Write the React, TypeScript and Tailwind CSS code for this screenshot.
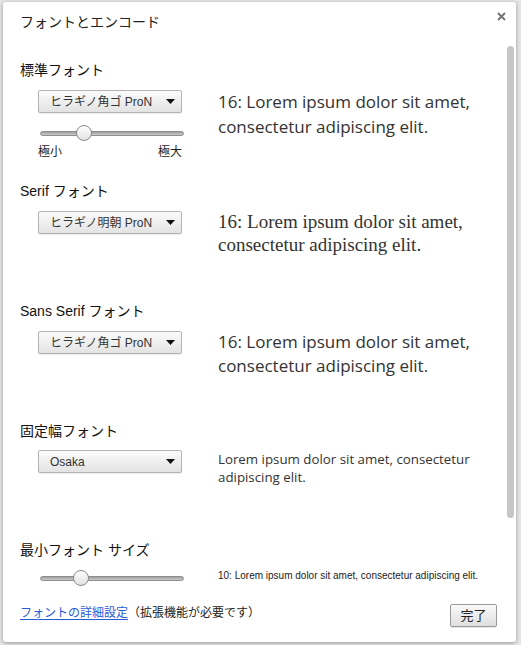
import React from "react";

function Arrow() {
  return (
    <svg width="9" height="5" viewBox="0 0 9 5" className="block">
      <path d="M0 0H9L4.5 5Z" fill="#111" />
    </svg>
  );
}

function Select({ label }: { label: string }) {
  return (
    <div className="w-[144px] h-[23px] border border-[#b4b4b4] rounded-[2px] bg-linear-to-b from-[#fbfbfb] to-[#e3e3e3] flex items-center justify-between pl-[11px] pr-[6px] text-[12px] leading-none text-[#333] shadow-[0_1px_1px_rgba(0,0,0,0.08)]">
      <span>{label}</span>
      <Arrow />
    </div>
  );
}

function Slider({ pos }: { pos: number }) {
  return (
    <div className="relative w-[144px] h-[16px] flex items-center ml-[2px]">
      <div className="w-full h-[5px] rounded-full bg-linear-to-b from-[#9c9c9c] to-[#cdcdcd] border border-[#8e8e8e]" />
      <div
        className="absolute top-0 w-[16px] h-[16px] rounded-full border border-[#8a8a8a] bg-linear-to-b from-white to-[#e2e2e2]"
        style={{ left: pos }}
      />
    </div>
  );
}

function Label({ children }: { children: React.ReactNode }) {
  return <div className="h-[18px] leading-[18px] text-[14px] text-[#111]">{children}</div>;
}

export default function App() {
  return (
    <div className="w-[521px] h-[645px] bg-[#e6e6e6] pt-[2px] pl-[3px] overflow-hidden font-['Liberation_Sans','Noto_Sans_CJK_JP',sans-serif]">
      <div className="relative w-[513px] h-[640px] bg-white rounded-[3px] shadow-[0_1px_4px_rgba(0,0,0,0.35)] flex flex-col">
        <div className="h-[38px] shrink-0 pt-[11px] pl-[17px] text-[14px] leading-[18px] text-[#222]">
          フォントとエンコード
        </div>
        <div className="absolute top-[10px] right-[10px]">
          <svg width="9" height="9" viewBox="0 0 9 9" className="block">
            <path d="M1 1L8 8M8 1L1 8" stroke="#777" strokeWidth="2" />
          </svg>
        </div>

        <div className="h-[555px] shrink-0 flex">
          <div className="flex-1 overflow-hidden pl-[17px] pt-[21px]">
            {/* Section 1 */}
            <div className="h-[121px]">
              <Label>標準フォント</Label>
              <div className="flex mt-[11px] pl-[18px]">
                <div className="w-[180px] shrink-0">
                  <Select label="ヒラギノ角ゴ ProN" />
                  <div className="mt-[12px]">
                    <Slider pos={36} />
                  </div>
                  <div className="w-[144px] flex justify-between mt-[4px] text-[12px] leading-[14px] text-[#222]">
                    <span>極小</span>
                    <span>極大</span>
                  </div>
                </div>
                <div className="-mt-[1px] text-[17px] leading-[25px] text-[#333] font-['Open_Sans',sans-serif] whitespace-nowrap">
                  16: Lorem ipsum dolor sit amet,
                  <br />
                  consectetur adipiscing elit.
                </div>
              </div>
            </div>
            {/* Section 2 */}
            <div className="h-[120px]">
              <Label>Serif フォント</Label>
              <div className="flex mt-[11px] pl-[18px]">
                <div className="w-[180px] shrink-0">
                  <Select label="ヒラギノ明朝 ProN" />
                </div>
                <div className="-mt-[1px] text-[19px] leading-[23px] text-[#333] font-['Liberation_Serif',serif] whitespace-nowrap">
                  16: Lorem ipsum dolor sit amet,
                  <br />
                  consectetur adipiscing elit.
                </div>
              </div>
            </div>
            {/* Section 3 */}
            <div className="h-[120px]">
              <Label>Sans Serif フォント</Label>
              <div className="flex mt-[11px] pl-[18px]">
                <div className="w-[180px] shrink-0">
                  <Select label="ヒラギノ角ゴ ProN" />
                </div>
                <div className="-mt-[1px] text-[17px] leading-[24px] text-[#333] font-['Open_Sans',sans-serif] whitespace-nowrap">
                  16: Lorem ipsum dolor sit amet,
                  <br />
                  consectetur adipiscing elit.
                </div>
              </div>
            </div>
            {/* Section 4 */}
            <div className="h-[119px]">
              <Label>固定幅フォント</Label>
              <div className="flex mt-[10px] pl-[18px]">
                <div className="w-[180px] shrink-0">
                  <Select label="Osaka" />
                </div>
                <div className="text-[13.3px] leading-[18px] text-[#333] font-['Open_Sans',sans-serif] whitespace-nowrap">
                  Lorem ipsum dolor sit amet, consectetur
                  <br />
                  adipiscing elit.
                </div>
              </div>
            </div>
            {/* Section 5 */}
            <div>
              <Label>最小フォント サイズ</Label>
              <div className="flex items-center mt-[11px] pl-[18px]">
                <div className="w-[180px] shrink-0">
                  <Slider pos={33} />
                </div>
                <div className="text-[10px] leading-[12px] -mt-[4px] text-[#222] whitespace-nowrap">
                  10: Lorem ipsum dolor sit amet, consectetur adipiscing elit.
                </div>
              </div>
            </div>
          </div>
          <div className="w-[9px] shrink-0 pt-[6px] pr-[2px]">
            <div className="w-[7px] h-[472px] rounded-full bg-[#c6c6c6]" />
          </div>
        </div>

        <div className="flex-1 flex items-start justify-between pl-[17px] pr-[19px] pt-[9px]">
          <div className="text-[12px] leading-[18px] text-[#222]">
            <a className="text-[#2a5bd7] underline underline-offset-2">フォントの詳細設定</a>
            <span>（拡張機能が必要です）</span>
          </div>
          <div className="w-[47px] h-[23px] border border-[#9a9a9a] rounded-[2px] bg-linear-to-b from-[#fafafa] to-[#dedede] flex items-center justify-center text-[13px] text-[#222] shadow-[0_1px_1px_rgba(0,0,0,0.1)]">
            完了
          </div>
        </div>
      </div>
    </div>
  );
}
